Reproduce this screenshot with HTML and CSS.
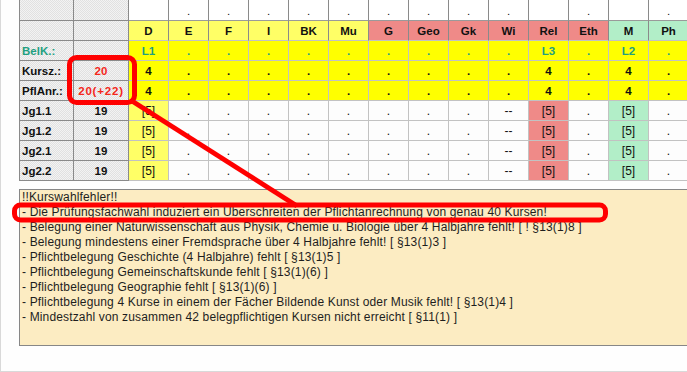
FILE: index.html
```html
<!DOCTYPE html>
<html lang="de">
<head>
<meta charset="utf-8">
<title>Kurswahl</title>
<link rel="stylesheet" href="styles.css">
</head>
<body>
<div class="frame">
  <div class="grid">
    <div class="row top">
      <div class="lab"></div><div class="sum"></div>
      <div class="c"></div><div class="c">.</div><div class="c">.</div><div class="c">.</div><div class="c">.</div><div class="c">.</div><div class="c">.</div><div class="c">.</div><div class="c">.</div><div class="c">.</div><div class="c"></div><div class="c">.</div><div class="c"></div><div class="c">.</div>
    </div>
    <div class="row head">
      <div class="lab"></div><div class="sum"></div>
      <div class="c ly">D</div><div class="c ly">E</div><div class="c ly">F</div><div class="c ly">I</div><div class="c ly">BK</div><div class="c ly">Mu</div><div class="c rd">G</div><div class="c rd">Geo</div><div class="c rd">Gk</div><div class="c rd">Wi</div><div class="c rd">Rel</div><div class="c rd">Eth</div><div class="c gr">M</div><div class="c gr">Ph</div>
    </div>
    <div class="row yel belk">
      <div class="lab">BelK.:</div><div class="sum"></div>
      <div class="c">L1</div><div class="c">.</div><div class="c">.</div><div class="c">.</div><div class="c">.</div><div class="c">.</div><div class="c">.</div><div class="c">.</div><div class="c">.</div><div class="c">.</div><div class="c">L3</div><div class="c">.</div><div class="c">L2</div><div class="c">.</div>
    </div>
    <div class="row yel">
      <div class="lab">Kursz.:</div><div class="sum red">20</div>
      <div class="c">4</div><div class="c">.</div><div class="c">.</div><div class="c">.</div><div class="c">.</div><div class="c">.</div><div class="c">.</div><div class="c">.</div><div class="c">.</div><div class="c">.</div><div class="c">4</div><div class="c">.</div><div class="c">4</div><div class="c">.</div>
    </div>
    <div class="row yel">
      <div class="lab">PflAnr.:</div><div class="sum red wide">20(+22)</div>
      <div class="c">4</div><div class="c">.</div><div class="c">.</div><div class="c">.</div><div class="c">.</div><div class="c">.</div><div class="c">.</div><div class="c">.</div><div class="c">.</div><div class="c">.</div><div class="c">4</div><div class="c">.</div><div class="c">4</div><div class="c">.</div>
    </div>
    <div class="row jg">
      <div class="lab">Jg1.1</div><div class="sum">19</div>
      <div class="c ly">[5]</div><div class="c">.</div><div class="c">.</div><div class="c">.</div><div class="c">.</div><div class="c">.</div><div class="c">.</div><div class="c">.</div><div class="c">.</div><div class="c">--</div><div class="c rd">[5]</div><div class="c">.</div><div class="c gr">[5]</div><div class="c">.</div>
    </div>
    <div class="row jg">
      <div class="lab">Jg1.2</div><div class="sum">19</div>
      <div class="c ly">[5]</div><div class="c">.</div><div class="c">.</div><div class="c">.</div><div class="c">.</div><div class="c">.</div><div class="c">.</div><div class="c">.</div><div class="c">.</div><div class="c">--</div><div class="c rd">[5]</div><div class="c">.</div><div class="c gr">[5]</div><div class="c">.</div>
    </div>
    <div class="row jg">
      <div class="lab">Jg2.1</div><div class="sum">19</div>
      <div class="c ly">[5]</div><div class="c">.</div><div class="c">.</div><div class="c">.</div><div class="c">.</div><div class="c">.</div><div class="c">.</div><div class="c">.</div><div class="c">.</div><div class="c">--</div><div class="c rd">[5]</div><div class="c">.</div><div class="c gr">[5]</div><div class="c">.</div>
    </div>
    <div class="row jg">
      <div class="lab">Jg2.2</div><div class="sum">19</div>
      <div class="c ly">[5]</div><div class="c">.</div><div class="c">.</div><div class="c">.</div><div class="c">.</div><div class="c">.</div><div class="c">.</div><div class="c">.</div><div class="c">.</div><div class="c">--</div><div class="c rd">[5]</div><div class="c">.</div><div class="c gr">[5]</div><div class="c">.</div>
    </div>
  </div>

  <div class="errors">
    <div>!!Kurswahlfehler!!</div>
    <div>- Die Prüfungsfachwahl induziert ein Überschreiten der Pflichtanrechnung von genau 40 Kursen!</div>
    <div>- Belegung einer Naturwissenschaft aus Physik, Chemie u. Biologie über 4 Halbjahre fehlt! [ ! §13(1)8 ]</div>
    <div>- Belegung mindestens einer Fremdsprache über 4 Halbjahre fehlt! [ §13(1)3 ]</div>
    <div>- Pflichtbelegung Geschichte (4 Halbjahre) fehlt [ §13(1)5 ]</div>
    <div>- Pflichtbelegung Gemeinschaftskunde fehlt [ §13(1)(6) ]</div>
    <div>- Pflichtbelegung Geographie fehlt [ §13(1)(6) ]</div>
    <div>- Pflichtbelegung 4 Kurse in einem der Fächer Bildende Kunst oder Musik fehlt! [ §13(1)4 ]</div>
    <div>- Mindestzahl von zusammen 42 belegpflichtigen Kursen nicht erreicht [ §11(1) ]</div>
  </div>

  <svg class="marks" width="687" height="372" viewBox="0 0 687 372" aria-hidden="true">
    <rect x="68.5" y="57.5" width="65" height="45" rx="7" ry="7" fill="none" stroke="#ff0000" stroke-width="5"/>
    <rect x="13.5" y="205" width="591" height="15" rx="6" ry="6" fill="none" stroke="#ff0000" stroke-width="5"/>
    <line x1="131" y1="101" x2="296" y2="206" stroke="#ff0000" stroke-width="5"/>
  </svg>
</div>
</body>
</html>
```

FILE: styles.css
```css
html, body {
  margin: 0;
  padding: 0;
  overflow: hidden;
  background: #fefefe;
}

.frame {
  position: relative;
  box-sizing: border-box;
  width: 687px;
  height: 372px;
  padding-left: 18px;
  border-left: 1px solid #d9d9d9;
  border-bottom: 1px solid #d9d9d9;
  overflow: hidden;
}

.grid {
  display: grid;
  grid-template-columns: 55px 55px repeat(14, 40px);
  grid-template-rows: 21px repeat(8, 20px);
  width: 670px;
  font: bold 11.5px "Liberation Sans", Arial, sans-serif;
  color: #111;
}

.row {
  display: contents;
}

.row > div {
  box-sizing: border-box;
  display: flex;
  align-items: center;
  justify-content: center;
  white-space: nowrap;
  overflow: hidden;
  border-right: 1px solid #c2c2c2;
  border-bottom: 1px solid #c2c2c2;
  padding-top: 1px;
}

.row > .lab,
.row > .sum {
  background-color: #ebebeb;
  background-image: repeating-conic-gradient(#f3f3f3 0 25%, #e1e1e1 0 50%);
  background-size: 2px 2px;
  border-right-color: #8a8a8a;
  border-bottom-color: #8a8a8a;
}

.row > .lab {
  justify-content: flex-start;
  padding-left: 2px;
  border-left: 1px solid #8a8a8a;
}

.top > .c {
  background: #ffffff;
  font-weight: normal;
  border-right-color: #8a8a8a;
  border-bottom-color: #9a9a9a;
}

.head > .c {
  border-right-color: #8a8a8a;
}

.yel > .c {
  background: #ffff00;
}

.belk > .c,
.belk > .lab {
  color: #1f9f80;
}

.jg > .c {
  background: #fdfdfd;
  font-weight: normal;
  font-size: 12px;
}

.row > .ly {
  background: #ffff66;
}

.row > .rd {
  background: #ef8a88;
}

.row > .gr {
  background: #b2eec8;
}

.red {
  color: #f4281c;
}

.wide {
  letter-spacing: 0.8px;
}

.errors {
  box-sizing: border-box;
  width: 670px;
  height: 157px;
  margin-top: 8px;
  padding: 0 0 0 2px;
  background: #fcecc2;
  border: 1px solid #878787;
  border-right: none;
  font: 12px/15px "Liberation Sans", Arial, sans-serif;
  letter-spacing: 0.15px;
  color: #1e1e1e;
  white-space: nowrap;
}

.marks {
  position: absolute;
  left: 0;
  top: 0;
  pointer-events: none;
}
```
